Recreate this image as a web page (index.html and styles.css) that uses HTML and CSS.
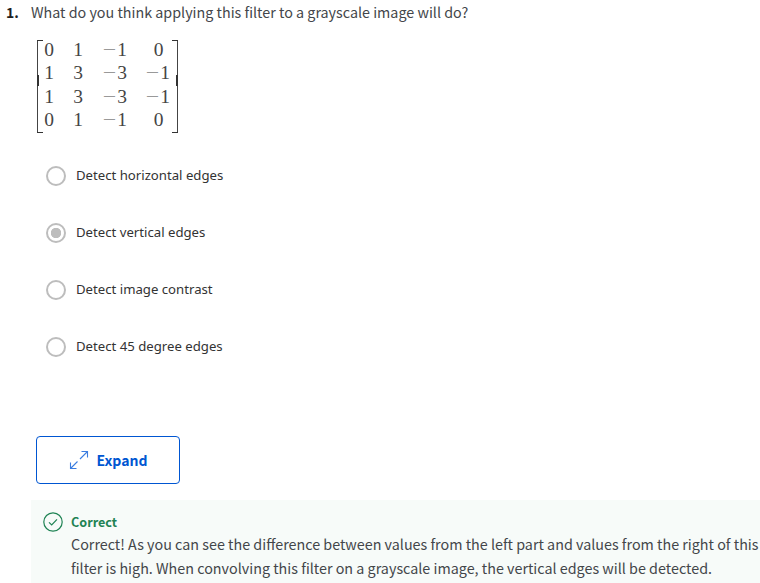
FILE: index.html
```html
<!DOCTYPE html>
<html lang="en">
<head>
<meta charset="utf-8">
<title>Quiz</title>
<link rel="stylesheet" href="styles.css">
</head>
<body>
<main class="quiz">
  <div class="question"><b class="number">1.</b><span class="prompt">What do you think applying this filter to a grayscale image will do?</span></div>
  <div class="matrix">
    <span>0</span><span>1</span><span><i>−</i>1</span><span>0</span>
    <span>1</span><span>3</span><span><i>−</i>3</span><span><i>−</i>1</span>
    <span>1</span><span>3</span><span><i>−</i>3</span><span><i>−</i>1</span>
    <span>0</span><span>1</span><span><i>−</i>1</span><span>0</span>
  </div>
  <div class="options">
    <div class="option"><span class="radio"></span><span>Detect horizontal edges</span></div>
    <div class="option"><span class="radio checked"></span><span>Detect vertical edges</span></div>
    <div class="option"><span class="radio"></span><span>Detect image contrast</span></div>
    <div class="option"><span class="radio"></span><span>Detect 45 degree edges</span></div>
  </div>
  <div class="expand">
    <svg width="20" height="20" viewBox="0 0 20 20" fill="none" stroke="#3b7de0" stroke-width="1.1"><path d="M1.500 18.500 8.500 11.500M11 9 18.500 1.500M12.500 1.500h6v6M1.500 12.500v6h6"/></svg>
    <span>Expand</span>
  </div>
  <div class="feedback">
    <svg class="tick" width="20" height="20" viewBox="0 0 20 20" fill="none" stroke="#1f8354" stroke-width="1.200"><circle cx="10" cy="10" r="9.200"/><path d="M6 10.300 8.700 13 14 7.300"/></svg>
    <div class="message">
      <div class="verdict"><b>Correct</b></div>
      <div class="line">Correct! As you can see the difference between values from the left part and values from the right of this</div>
      <div class="line">filter is high. When convolving this filter on a grayscale image, the vertical edges will be detected.</div>
    </div>
  </div>
</main>
</body>
</html>
```
FILE: styles.css
```css
* { box-sizing: border-box; }
body { margin: 0; background: #fff; color: #43464a; font-family: "Noto Sans CJK SC", "Open Sans", sans-serif; overflow: hidden; }
.quiz { width: 760px; height: 583px; overflow: hidden; display: flex; flex-direction: column; align-items: flex-start; white-space: nowrap; }
.question { height: 26px; line-height: 24px; padding-left: 6px; display: flex; font-size: 14.320px; }
.number { width: 25px; color: #1f1f1f; font-size: 14px; }
.matrix {
  margin: 14px 0 0 37px; width: 141px; height: 93px; padding-left: 2px;
  display: grid; grid-template-columns: 20px 38px 37px 49px; grid-template-rows: repeat(4, 23.330px);
  color: #444; font: 19.500px/20px "Liberation Serif", serif; text-align: center;
  background:
    linear-gradient(#333, #333) 0 0 / 6px 1px no-repeat,
    linear-gradient(#333, #333) 0 100% / 6px 1px no-repeat,
    linear-gradient(#333, #333) 100% 0 / 6px 1px no-repeat,
    linear-gradient(#333, #333) 100% 100% / 6px 1px no-repeat,
    linear-gradient(#333, #333) 0 35px / 2px 11px no-repeat,
    linear-gradient(#333, #333) 100% 35px / 2px 11px no-repeat,
    linear-gradient(#444, #444) 0 0 / 1px 100% no-repeat,
    linear-gradient(#444, #444) 100% 0 / 1px 100% no-repeat;
}
.matrix i { display: inline-block; font-style: normal; color: #999; margin-right: 2px; transform: scaleX(1.22); }
.options { margin: 19px 0 0 46px; font: 13.180px/18px "Noto Sans", sans-serif; color: #333; }
.option { height: 57px; padding-top: 14px; display: flex; gap: 10px; }
.radio { width: 20px; height: 20px; border: 2px solid #bdbdbd; border-radius: 50%; }
.checked { background: radial-gradient(circle, #bdbdbd 4.900px, transparent 5.500px); }
.expand { margin: 56px 0 0 36px; width: 144px; height: 48px; border: 1px solid #0056d2; border-radius: 4px; display: flex; align-items: center; justify-content: center; gap: 8px; color: #0056d2; font-weight: 700; font-size: 14px; }
.feedback { margin: 16px 0 0 31px; width: 729px; height: 83px; background: #f7fbf9; display: flex; padding: 12px 0 0 12px; }
.message { padding-left: 8px; }
.verdict { height: 21px; line-height: 20px; color: #1f8354; font-size: 12.600px; }
.line { height: 24px; line-height: 21px; font-size: 14.330px; }
```
